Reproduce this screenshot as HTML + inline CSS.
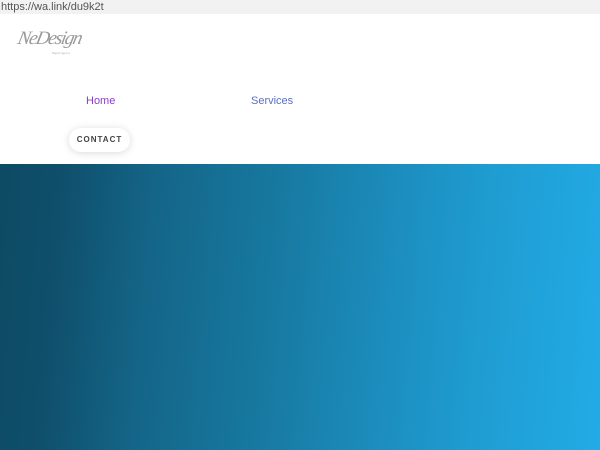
<!DOCTYPE html>
<html><head><meta charset="utf-8"><style>
html,body{margin:0;padding:0;width:600px;height:450px;overflow:hidden;background:#fff;font-family:"Liberation Sans","DejaVu Sans",sans-serif}
.bar{position:absolute;left:0;top:0;width:600px;height:14px;background:#f2f2f2;color:#555;font-size:11px;line-height:14px;padding-left:1px}
.logo{position:absolute;left:18px;top:28px;font-family:"Liberation Serif",serif;font-style:italic;font-size:19px;color:#999;letter-spacing:-1.5px;transform:skewX(-12deg)}
.logo small{position:absolute;left:37px;top:23px;font-size:3px;color:#aaa;letter-spacing:0;font-style:normal}
.home{position:absolute;left:86px;top:95px;font-size:11px;color:#8a3fbf}
.serv{position:absolute;left:251px;top:95px;font-size:11px;color:#5a6fc0}
.btn{position:absolute;left:69px;top:128px;width:61px;height:24px;border-radius:12px;background:#fff;box-shadow:0 1px 8px rgba(0,0,0,.15);font-size:8px;font-weight:bold;letter-spacing:1px;color:#444;text-align:center;line-height:24px}
.hero{position:absolute;left:0;top:164px;width:600px;height:286px;background:linear-gradient(95deg,#0d4a64 0%,#0f4f6b 10%,#146588 25%,#1779a0 45%,#1c8ebf 65%,#1f9dd2 80%,#22abe6 100%)}
</style></head><body>
<div class="bar">https://wa.link/du9k2t</div>
<div class="logo">NeDesign<small>Digital Agency</small></div>
<div class="home">Home</div>
<div class="serv">Services</div>
<div class="btn">CONTACT</div>
<div class="hero"></div>
</body></html>
